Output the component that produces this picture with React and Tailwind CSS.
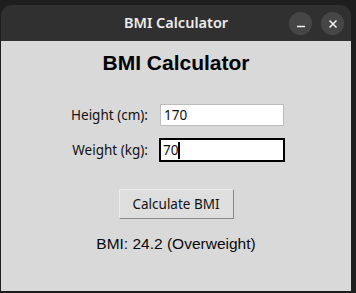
export default function App() {
  return (
    <div className="w-[356px] h-[293px] bg-[#1e1e1e] pt-[5px] pl-[1px] pr-[5px] pb-[2px] overflow-hidden">
      <div className="flex flex-col h-full rounded-t-[11px] overflow-hidden">
        {/* Title bar */}
        <div className="relative h-[36px] bg-[#303030] flex items-center justify-center shrink-0">
          <span className="font-['Noto_Sans',sans-serif] font-semibold text-[14.5px] text-[#ececec]">
            BMI Calculator
          </span>
          <div className="absolute right-[7px] top-[7px] flex gap-[9px]">
            <div className="w-[23px] h-[23px] rounded-full bg-[#464646] flex items-center justify-center">
              <svg width="10" height="10" viewBox="0 0 10 10">
                <path d="M1 7.5H9" stroke="#f2f2f2" strokeWidth="1.5" />
              </svg>
            </div>
            <div className="w-[23px] h-[23px] rounded-full bg-[#464646] flex items-center justify-center">
              <svg width="10" height="10" viewBox="0 0 10 10">
                <path d="M1.5 1.5L8.5 8.5M8.5 1.5L1.5 8.5" stroke="#f2f2f2" strokeWidth="1.5" />
              </svg>
            </div>
          </div>
        </div>

        {/* Body */}
        <div className="flex-1 bg-[#d9d9d9] flex flex-col items-center">
          <h1 className="mt-[10px] font-['Liberation_Sans',Arial,sans-serif] font-bold text-[21px] leading-[24px] text-black">
            BMI Calculator
          </h1>

          <div className="mt-[28px] ml-[4px] grid grid-cols-[auto_auto] gap-x-[11px] gap-y-[11px] font-['Noto_Sans',sans-serif] text-[13.5px] text-[#111]">
            <div className="flex items-center justify-end h-[24px] pt-[1px]">Height (cm):</div>
            <div className="w-[126px] h-[24px] p-[1px]">
              <div className="h-full border border-[#bdbdbd] bg-white flex items-center pl-[3px]">170</div>
            </div>

            <div className="flex items-center justify-end h-[24px] pt-[1px]">Weight (kg):</div>
            <div className="w-[126px] h-[24px] border-2 border-black bg-white flex items-center pl-[2px]">
              <span>70</span>
              <span className="w-[2px] h-[17px] bg-black" />
            </div>
          </div>

          <button className="mt-[27px] w-[115px] h-[30px] bg-[#dedede] border border-t-[#ececec] border-l-[#ececec] border-r-[#8a8a8a] border-b-[#8a8a8a] font-['Noto_Sans',sans-serif] text-[13.5px] text-[#111] flex items-center justify-center">
            Calculate BMI
          </button>

          <div className="mt-[16px] font-['Liberation_Sans',Arial,sans-serif] text-[15.5px] leading-[18px] text-[#0a0a0a]">
            BMI: 24.2 (Overweight)
          </div>
        </div>
      </div>
    </div>
  );
}
